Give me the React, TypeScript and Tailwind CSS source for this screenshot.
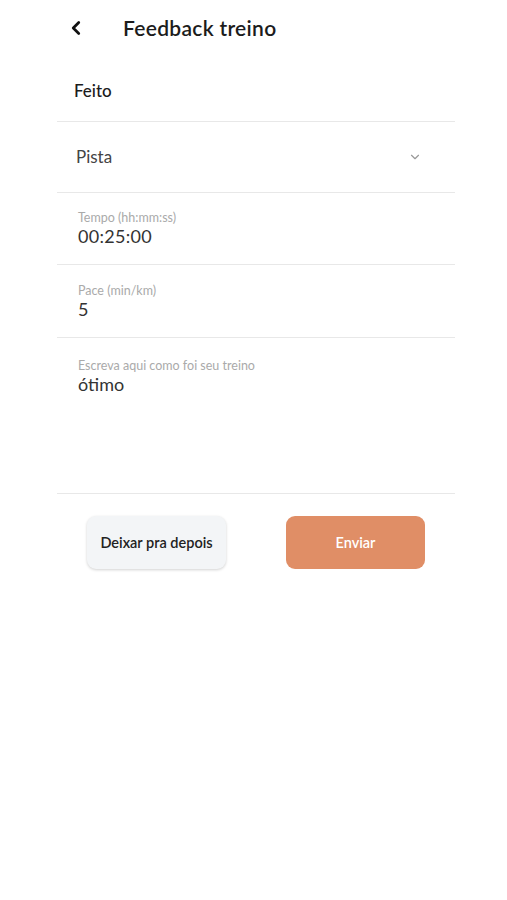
import { ChevronLeft, ChevronDown } from 'lucide-react';

export default function App() {
  return (
    <div className="min-h-[900px] bg-white font-['Lato','Noto_Sans',sans-serif] text-[#1c1c1c]">
      <div className="ml-[57px] w-[398px]">
        {/* Header */}
        <div className="flex h-[56px] items-center pl-[8px]">
          <ChevronLeft size={22} strokeWidth={3} className="text-[#111]" />
          <h1 className="ml-[36px] text-[21px] font-semibold tracking-[0.3px]">Feedback treino</h1>
        </div>

        <div className="flex h-[65px] items-center pl-[17px] pt-[5px] text-[17px] font-medium">Feito</div>

        {/* Select */}
        <div className="flex h-[71px] items-center justify-between border-t border-[#e8e8e8] pl-[19px] pr-[33px]">
          <span className="text-[17px] text-[#444]">Pista</span>
          <ChevronDown size={14} className="text-[#999]" />
        </div>

        {/* Tempo */}
        <div className="flex h-[72px] flex-col justify-center border-t border-[#e8e8e8] pl-[21px]">
          <span className="text-[12.5px] leading-[16px] text-[#aaa]">Tempo (hh:mm:ss)</span>
          <span className="text-[18px] leading-[21px] tracking-[0.3px] text-[#333]">00:25:00</span>
        </div>

        {/* Pace */}
        <div className="flex h-[73px] flex-col justify-center border-t border-[#e8e8e8] pl-[21px]">
          <span className="text-[12.5px] leading-[16px] text-[#aaa]">Pace (min/km)</span>
          <span className="text-[18px] leading-[21px] text-[#333]">5</span>
        </div>

        {/* Observação */}
        <div className="flex h-[157px] flex-col border-t border-b border-[#e8e8e8] pl-[21px] pt-[20px]">
          <span className="text-[12.5px] leading-[16px] text-[#aaa]">Escreva aqui como foi seu treino</span>
          <span className="text-[18px] leading-[21px] text-[#333]">ótimo</span>
        </div>

        {/* Buttons */}
        <div className="mt-[22px] flex justify-between px-[30px]">
          <button className="h-[53px] w-[139px] rounded-[9px] bg-[#f3f5f7] text-[14.5px] font-semibold text-[#222] shadow-[0_1px_3px_rgba(0,0,0,0.18)]">
            Deixar pra depois
          </button>
          <button className="h-[53px] w-[139px] rounded-[9px] bg-[#e08e66] text-[14.5px] font-semibold text-white">
            Enviar
          </button>
        </div>
      </div>
    </div>
  );
}
